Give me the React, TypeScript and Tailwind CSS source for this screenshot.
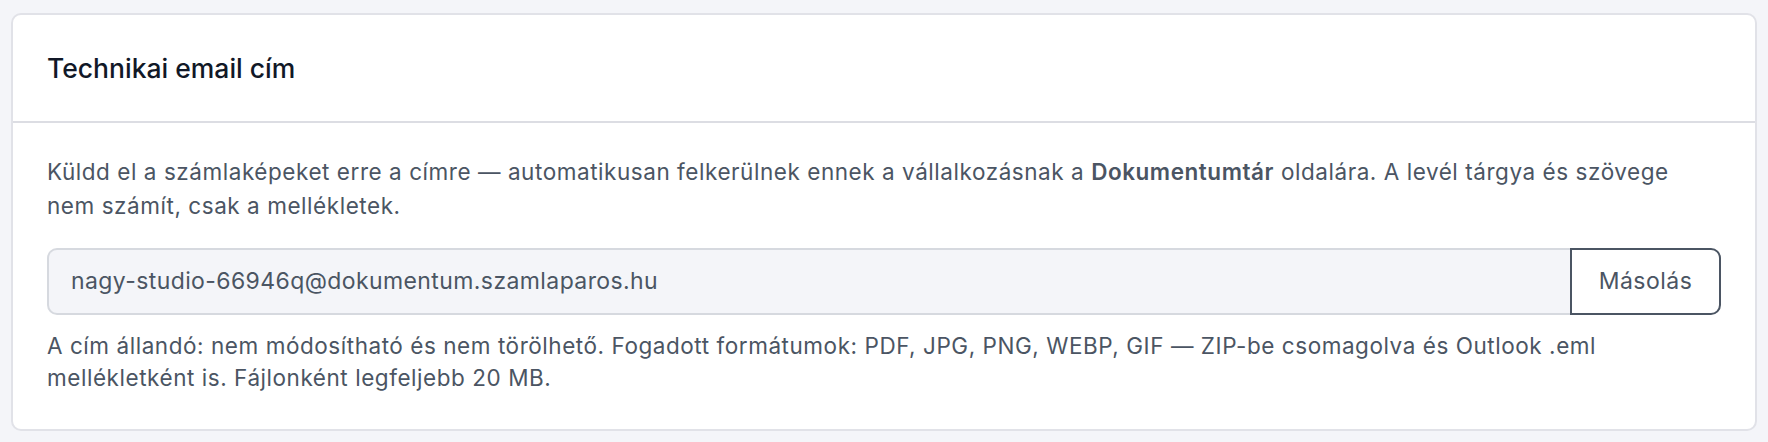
import React from "react";

export default function App() {
  return (
    <div className="min-h-[442px] w-full bg-[#f4f5f9] px-[11px] pt-[13px] pb-[12px]" style={{ fontFamily: "Inter, 'Noto Sans', sans-serif" }}>
      <div className="rounded-[10px] border-2 border-[#e1e2e8] bg-white">
        <div className="flex h-[108px] items-center border-b-2 border-[#dcdde3] px-[34px]">
          <h2 className="text-[26.5px] font-medium leading-[34px] text-[#111827]">Technikai email cím</h2>
        </div>
        <div className="px-[34px] pt-[32px] pb-[35px]">
          <p className="text-[22.5px] leading-[34px] tracking-[0.55px] text-[#4b5563]">
            Küldd el a számlaképeket erre a címre — automatikusan felkerülnek ennek a vállalkozásnak a{" "}
            <span className="font-semibold">Dokumentumtár</span> oldalára. A levél tárgya és szövege nem számít, csak a mellékletek.
          </p>
          <div className="mt-[25px] flex h-[67px]">
            <div className="flex flex-1 items-center rounded-l-[10px] border-2 border-r-0 border-[#d6d9df] bg-[#f4f5f9] px-[22px] text-[23px] tracking-[0.4px] text-[#4b5563]">
              nagy-studio-66946q@dokumentum.szamlaparos.hu
            </div>
            <button className="w-[151px] rounded-r-[10px] border-2 border-[#4b5563] bg-white text-[23px] tracking-[0.5px] text-[#4b5563]">
              Másolás
            </button>
          </div>
          <p className="mt-[15px] text-[22.5px] leading-[32px] tracking-[0.55px] text-[#4b5563]">
            A cím állandó: nem módosítható és nem törölhető. Fogadott formátumok: PDF, JPG, PNG, WEBP, GIF — ZIP-be csomagolva és Outlook .eml mellékletként is. Fájlonként legfeljebb 20 MB.
          </p>
        </div>
      </div>
    </div>
  );
}
